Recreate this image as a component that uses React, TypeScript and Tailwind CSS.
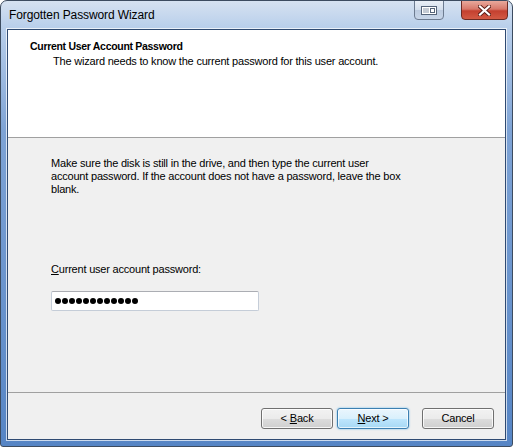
import React from "react";

const font = { fontFamily: '"Liberation Sans", Arial, sans-serif' };

function WinButton({ children, primary = false }: { children: React.ReactNode; primary?: boolean }) {
  return (
    <button
      className={
        "w-[72px] h-[21px] rounded-[3px] border text-[11px] tracking-[-0.2px] text-black leading-none flex items-center justify-center " +
        (primary
          ? "border-[#3c7fb1] bg-[linear-gradient(to_bottom,#eaf6fd_0%,#d9f0fc_50%,#bee6fd_50%,#a7d9f5_100%)] shadow-[0_0_2px_#5eb6ea,inset_0_0_0_1px_rgba(255,255,255,0.7)]"
          : "border-[#707070] bg-[linear-gradient(to_bottom,#f2f2f2_0%,#ebebeb_50%,#dddddd_50%,#cfcfcf_100%)] shadow-[inset_0_0_0_1px_rgba(255,255,255,0.8)]")
      }
      style={font}
    >
      {children}
    </button>
  );
}

export default function App() {
  return (
    <div className="w-[513px] h-[447px] bg-white" style={font}>
      <div className="w-full h-full flex flex-col rounded-t-[7px] rounded-b-[3px] border border-[#3d4c60] bg-[linear-gradient(to_bottom,#d6e2f1_0px,#b9cfeb_26px,#7ea3d5_130px,#5685c5_100%)] overflow-hidden">
        {/* title bar */}
        <div className="h-[27px] flex items-start pl-[8px] pr-[4px]">
          <span className="mt-[7px] text-[12px] leading-[14px] tracking-[-0.1px] text-black">Forgotten Password Wizard</span>
          <div className="ml-auto -mt-[1px] flex gap-[17px]">
            <div className="w-[30px] h-[20px] rounded-b-[4px] border border-[#6c7b90] bg-[linear-gradient(to_bottom,#e9eff7_0%,#d3deec_50%,#bccbe0_50%,#c8d6e9_100%)] flex items-center justify-center">
              <svg width="16" height="9" viewBox="0 0 16 9">
                <rect x="0.5" y="0.5" width="15" height="8" fill="#fff" stroke="#55647a" />
                <line x1="3" y1="2" x2="3" y2="7" stroke="#8a97aa" />
                <line x1="5" y1="2" x2="5" y2="7" stroke="#8a97aa" />
                <line x1="7" y1="2" x2="7" y2="7" stroke="#8a97aa" />
                <rect x="9.5" y="2.5" width="4" height="4" fill="#fff" stroke="#55647a" />
              </svg>
            </div>
            <div className="w-[47px] h-[20px] rounded-b-[4px] border border-[#6b2b24] bg-[linear-gradient(to_bottom,#e8a99c_0%,#d7786a_45%,#c4402f_55%,#d35a44_100%)] flex items-center justify-center">
              <svg width="13" height="11" viewBox="0 0 13 11">
                <path d="M2 1.5 L11 9.5 M11 1.5 L2 9.5" stroke="#5a1f18" strokeWidth="4" strokeLinecap="square" />
                <path d="M2 1.5 L11 9.5 M11 1.5 L2 9.5" stroke="#ffffff" strokeWidth="2.2" strokeLinecap="square" />
              </svg>
            </div>
          </div>
        </div>

        {/* client area */}
        <div className="mx-[5px] mb-[5px] flex-1 border border-white/70">
          <div className="h-full border border-[#2f4a72] flex flex-col">
            {/* header */}
            <div className="h-[108px] bg-white border-b border-[#a0a0a0] pt-[10px] pl-[22px]">
              <div className="text-[10.5px] leading-[13px] font-bold tracking-[-0.3px] text-black">Current User Account Password</div>
              <div className="mt-[2px] ml-[23px] text-[11px] leading-[13px] tracking-[-0.2px] text-black">
                The wizard needs to know the current password for this user account.
              </div>
            </div>

            {/* body */}
            <div className="h-[254px] bg-[#f0f0f0] pt-[19px] pl-[43px]">
              <p className="text-[11px] leading-[13px] tracking-[-0.2px] text-black whitespace-nowrap">
                Make sure the disk is still in the drive, and then type the current user
                <br />
                account password. If the account does not have a password, leave the box
                <br />
                blank.
              </p>
              <div className="mt-[67px] text-[11px] leading-[13px] tracking-[-0.2px] text-black">
                <span className="underline">C</span>urrent user account password:
              </div>
              <div className="mt-[15px] w-[208px] h-[20px] rounded-[2px] border border-[#c5cdd8] border-t-[#abadb3] bg-white flex items-center gap-[1px] pl-[3px]">
                {Array.from({ length: 12 }).map((_, i) => (
                  <span key={i} className="w-[6px] h-[6px] rounded-full bg-black" />
                ))}
              </div>
            </div>

            {/* footer */}
            <div className="flex-1 bg-[#f0f0f0] border-t border-[#a0a0a0] flex items-start justify-end pt-[15px] pr-[11px]">
              <WinButton>
                &lt; <span className="underline ml-[3px]">B</span>ack
              </WinButton>
              <div className="ml-[4px]">
                <WinButton primary>
                  <span className="underline">N</span>ext &gt;
                </WinButton>
              </div>
              <div className="ml-[13px]">
                <WinButton>Cancel</WinButton>
              </div>
            </div>
          </div>
        </div>
      </div>
    </div>
  );
}
